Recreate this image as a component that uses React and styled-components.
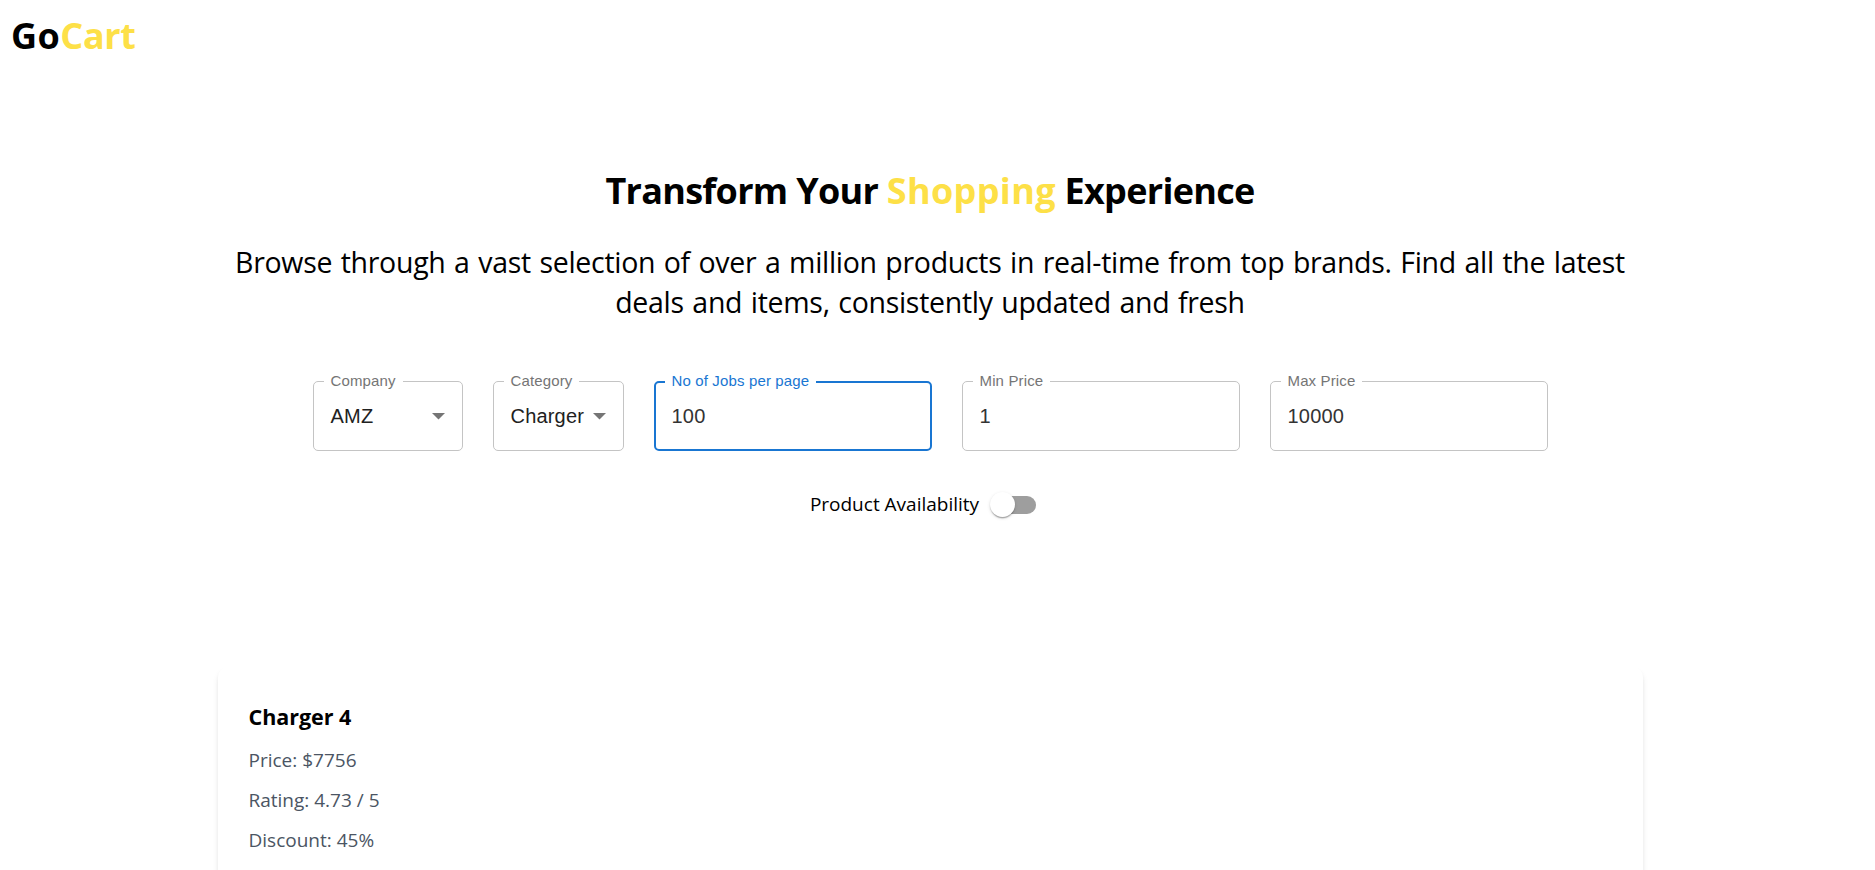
import React from 'react';
import styled, { createGlobalStyle } from 'styled-components';

const GlobalStyle = createGlobalStyle`
  * { box-sizing: border-box; }
  html, body { margin: 0; background: #fff; }
  body { height: 870px; overflow: hidden; color: #000; font-family: "Open Sans", "Noto Sans", sans-serif; }
  h1, h2, p { margin: 0; }
`;

const Page = styled.div`
  width: 1860px;
  height: 870px;
  overflow: hidden;
`;

const Header = styled.header`
  height: 168px;
  padding: 13px 11px;
`;

const Logo = styled.div`
  font-size: 36px;
  line-height: 45px;
  font-weight: 700;
  letter-spacing: 0.5px;
`;

const Accent = styled.span`
  color: #fde047;
  letter-spacing: ${(p) => p.$tracking}px;
`;

const Hero = styled.section`
  display: flex;
  flex-direction: column;
  align-items: center;
  height: 499px;
`;

const Title = styled.h1`
  font-size: 36px;
  line-height: 45px;
  font-weight: 700;
  letter-spacing: -0.7px;
  white-space: nowrap;
`;

const Lead = styled.p`
  margin-top: 29px;
  font-size: 28.5px;
  line-height: 40px;
  letter-spacing: -0.3px;
  word-spacing: 1.5px;
  text-align: center;
  white-space: nowrap;
`;

const Filters = styled.div`
  display: flex;
  gap: 30px;
  margin-top: 59px;
  font-family: "Liberation Sans", Arial, sans-serif;
`;

const Field = styled.div`
  position: relative;
  display: flex;
  align-items: center;
  justify-content: space-between;
  width: ${(p) => p.$width}px;
  height: 70px;
  padding: 0 ${(p) => (p.$active ? 16 : 17)}px;
  border: ${(p) => (p.$active ? '2px solid #1976d2' : '1px solid #c4c4c4')};
  border-radius: 5px;
  font-size: 20px;
  letter-spacing: 0.19px;
  color: ${(p) => (p.$select ? '#212121' : '#333')};
`;

const FieldLabel = styled.span`
  position: absolute;
  top: ${(p) => (p.$active ? -11 : -10)}px;
  left: ${(p) => (p.$active ? 9 : 10)}px;
  padding: 0 7px;
  background: #fff;
  font-size: 15px;
  line-height: 18px;
  letter-spacing: 0.14px;
  white-space: nowrap;
  color: ${(p) => (p.$active ? '#1976d2' : '#757575')};
`;

const Arrow = styled.svg`
  width: 13px;
  height: 7px;
  fill: #757575;
`;

const Availability = styled.div`
  display: flex;
  align-items: center;
  gap: 14px;
  height: 27px;
  margin-top: 40px;
  padding-right: 14px;
  font-size: 19px;
  line-height: 25px;
`;

const SwitchTrack = styled.div`
  display: flex;
  align-items: center;
  width: 43px;
  height: 18px;
  border-radius: 9px;
  background: #9e9e9e;
`;

const SwitchThumb = styled.div`
  flex: none;
  width: 25px;
  height: 25px;
  margin-left: -3px;
  border-radius: 50%;
  background: #fff;
  box-shadow: 0 2.5px 1.25px -1.25px rgba(0, 0, 0, 0.2), 0 1.25px 1.25px rgba(0, 0, 0, 0.14), 0 1.25px 3.75px rgba(0, 0, 0, 0.12);
`;

const Card = styled.article`
  width: 1425px;
  height: 300px;
  margin: 0 auto;
  padding: 32px 31px;
  border-radius: 10px;
  background: #fff;
  box-shadow: 0 5px 7.5px -1.25px rgba(0, 0, 0, 0.1), 0 2.5px 5px -2.5px rgba(0, 0, 0, 0.1);
`;

const ProductName = styled.h2`
  margin-bottom: 11px;
  font-size: 21.5px;
  line-height: 35px;
  font-weight: 700;
  letter-spacing: -0.05px;
`;

const Detail = styled.p`
  margin-bottom: 10px;
  font-size: 19px;
  line-height: 30px;
  color: #4b5563;
`;

const fields = [
  { label: 'Company', value: 'AMZ', width: 150, select: true },
  { label: 'Category', value: 'Charger', width: 131, select: true },
  { label: 'No of Jobs per page', value: '100', width: 278, active: true },
  { label: 'Min Price', value: '1', width: 278 },
  { label: 'Max Price', value: '10000', width: 278 },
];

const details = ['Price: $7756', 'Rating: 4.73 / 5', 'Discount: 45%'];

export default function App() {
  return (
    <Page>
      <GlobalStyle />
      <Header>
        <Logo>Go<Accent $tracking={-0.4}>Cart</Accent></Logo>
      </Header>
      <Hero>
        <Title>Transform Your <Accent $tracking={0.35}>Shopping</Accent> Experience</Title>
        <Lead>
          Browse through a vast selection of over a million products in real-time from top brands. Find all the latest
          <br />
          deals and items, consistently updated and fresh
        </Lead>
        <Filters>
          {fields.map((f) => (
            <Field key={f.label} $width={f.width} $active={f.active} $select={f.select}>
              <FieldLabel $active={f.active}>{f.label}</FieldLabel>
              <span>{f.value}</span>
              {f.select && <Arrow viewBox="0 0 13 7"><path d="M0 0h13L6.5 6.5z" /></Arrow>}
            </Field>
          ))}
        </Filters>
        <Availability>
          <span>Product Availability</span>
          <SwitchTrack><SwitchThumb /></SwitchTrack>
        </Availability>
      </Hero>
      <Card>
        <ProductName>Charger 4</ProductName>
        {details.map((d) => <Detail key={d}>{d}</Detail>)}
      </Card>
    </Page>
  );
}
